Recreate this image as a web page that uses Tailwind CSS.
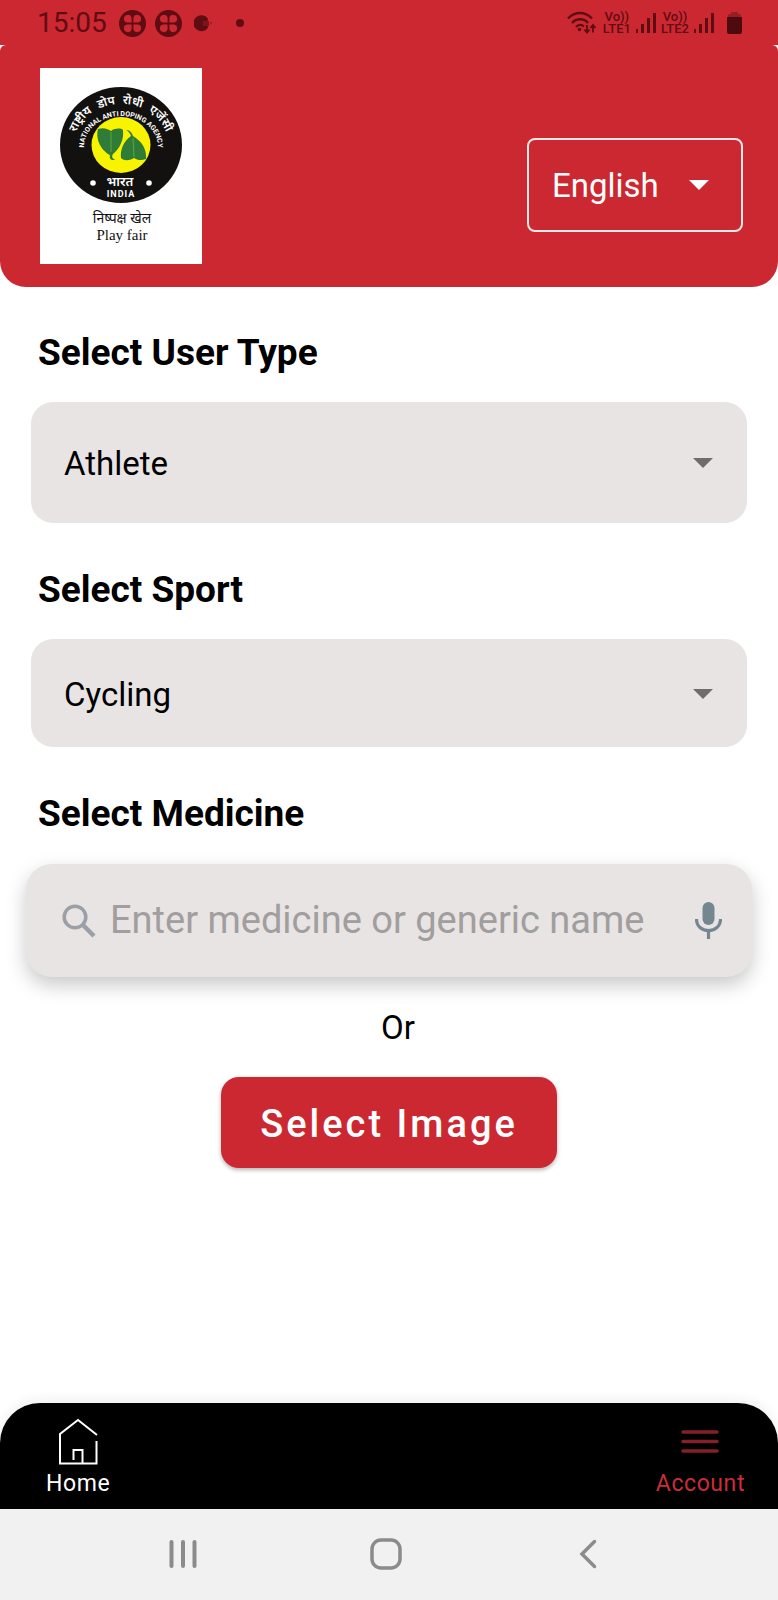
<!DOCTYPE html>
<html lang="en">
<head>
    <meta charset="UTF-8" />
    <meta name="viewport" content="width=device-width, initial-scale=1.0" />
    <script src="https://cdn.jsdelivr.net/npm/@tailwindcss/browser@4"></script>
    <title>Play Fair - Know Your Medicine</title>
</head>
<body class="min-h-screen flex flex-col bg-white text-black font-['Roboto',sans-serif]">
    <!-- Status bar -->
    <div class="flex items-center justify-between h-[45px] pl-[37px] pr-9 pt-px bg-[#cc2831] text-[#5f0c12]">
        <div class="flex items-center gap-3">
            <span class="text-[28px] leading-8">15:05</span>
            <svg class="w-[27px] h-[27px]" viewBox="0 0 27 27">
                <circle cx="13.5" cy="13.5" r="13.5" fill="currentColor" />
                <g fill="#cc2831">
                    <path d="M12.6 12.6H8a3.900 3.900 0 1 1 4.600-4.600z" />
                    <path d="M14.400 12.600h4.600a3.900 3.900 0 1 0-4.600-4.600z" />
                    <path d="M12.600 14.400H8a3.900 3.900 0 1 0 4.600 4.600z" />
                    <path d="M14.400 14.400h4.600a3.900 3.900 0 1 1-4.600 4.600z" />
                </g>
            </svg>
            <svg class="w-[27px] h-[27px] -ml-[3px]" viewBox="0 0 27 27">
                <circle cx="13.5" cy="13.5" r="13.5" fill="currentColor" />
                <g fill="#cc2831">
                    <path d="M12.6 12.6H8a3.900 3.900 0 1 1 4.600-4.600z" />
                    <path d="M14.400 12.600h4.600a3.900 3.900 0 1 0-4.600-4.600z" />
                    <path d="M12.600 14.400H8a3.900 3.900 0 1 0 4.600 4.600z" />
                    <path d="M14.400 14.400h4.600a3.900 3.900 0 1 1-4.600 4.600z" />
                </g>
            </svg>
            <svg class="w-[19px] h-[18px]" viewBox="0 0 19 18">
                <path d="M14 4.500A8 8 0 1 0 14.500 13L13 12H9.500V7H13.500z" fill="currentColor" />
                <path d="M9 7H15V12H9z" fill="#7d141b" />
                <circle cx="17" cy="9" r="1.200" fill="#a11d25" />
            </svg>
            <span class="w-2 h-2 ml-[11px] rounded-full bg-[#5f0c12]"></span>
        </div>
        <div class="flex items-center gap-[5px]">
            <svg class="w-[29px] h-6" viewBox="0 0 29 24" fill="none" stroke="currentColor" stroke-width="2.400">
                <path d="M1 7.500C8 .2 18 .2 25 7.500M5 12c4.500-5 12-5 16 0M9 16c2.500-2.800 5.500-2.800 8-.5" />
                <circle cx="12.500" cy="18.500" r="1.800" fill="currentColor" stroke="none" />
                <path d="M20 14v7M17.500 18.500L20 21.500l2.500-3M26 21.500v-7M23.500 17l2.500-3 2.500 3" stroke-width="1.800" />
            </svg>
            <div class="ml-[2px] text-center text-[13px] leading-3 font-medium">
                <div>Vo))</div>
                <div>LTE1</div>
            </div>
            <svg class="w-5 h-6" viewBox="0 0 20 24" fill="currentColor">
                <path d="M0 18h2v4H0zM5 13h3v9H5zM11 7h3v15h-3zM17 2h3v20h-3z" />
            </svg>
            <div class="text-center text-[13px] leading-3 font-medium">
                <div>Vo))</div>
                <div>LTE2</div>
            </div>
            <svg class="w-5 h-6" viewBox="0 0 20 24" fill="currentColor">
                <path d="M0 18h2v4H0zM5 13h3v9H5zM11 7h3v15h-3zM17 2h3v20h-3z" />
            </svg>
            <svg class="w-[15px] h-6 ml-2" viewBox="0 0 15 24">
                <path d="M1 6V4.500Q1 3 2.500 3H4V1h7v2h1.500Q14 3 14 4.500V6z" fill="#9c1c24" />
                <path d="M0 6h15v15q0 2-2 2H2q-2 0-2-2z" fill="#4d0a0f" />
            </svg>
        </div>
    </div>

    <!-- Header -->
    <header class="flex items-start justify-between pl-10 pr-[35px] pt-[23px] pb-[23px] bg-[#cc2831] rounded-t-md rounded-b-[26px]">
        <svg class="w-[162px] h-[196px] bg-white" viewBox="0 0 162 196" role="img" aria-label="National Anti Doping Agency India">
            <defs>
                <path id="arcOuter" d="M34 76A47 40 0 0 1 128 76" />
                <path id="arcInner" d="M43 86L44 79A37 31 0 0 1 118 79L119 86" />
            </defs>
            <ellipse cx="81" cy="77" rx="61" ry="58" fill="#13110f" />
            <ellipse cx="81" cy="77" rx="29.500" ry="28" fill="#f8f400" />
            <path d="M58 61C64 59 68 61 71 63C75 60 81 60 83 62C84 72 80 80 73 86C71 89 73 92 76 91C71 94 69 90 70 87C62 83 55 72 58 61Z" fill="#2f7b38" />
            <path d="M86 62C90 62 92 65 93 68C101 73 107 80 106 91C101 93 97 92 94 90C89 93 84 93 81 90C80 81 84 73 91 68C90 65 89 64 86 62Z" fill="#2f7b38" />
            <path d="M71 64L71 84M93 70L94 89" stroke="#6fae3c" stroke-width=".8" />
            <g fill="#ffffff" text-anchor="middle">
                <text font-size="12" font-weight="600" font-family="Noto Sans Devanagari, Noto Sans, sans-serif"><textPath href="#arcOuter" startOffset="50%">राष्ट्रीय<tspan dx="4"> डोप</tspan><tspan dx="4"> रोधी</tspan><tspan dx="4"> एजेंसी</tspan></textPath></text>
                <text font-size="7" font-weight="700" font-family="Roboto, sans-serif"><textPath href="#arcInner" startOffset="50%">NATIONAL ANTI DOPING AGENCY</textPath></text>
                <text x="80" y="118" font-size="13" font-weight="600" font-family="Noto Sans Devanagari, Noto Sans, sans-serif">भारत</text>
                <text x="81" y="129" font-size="9" font-weight="700" letter-spacing="1" font-family="Roboto, sans-serif">INDIA</text>
            </g>
            <circle cx="53" cy="115" r="2.800" fill="#ffffff" />
            <circle cx="109" cy="115" r="2.800" fill="#ffffff" />
            <g fill="#13110f" text-anchor="middle">
                <text x="82" y="155" font-size="14" font-family="Noto Sans Devanagari, Noto Sans, sans-serif">निष्पक्ष खेल</text>
                <text x="82" y="172" font-size="15" font-family="Liberation Serif, serif">Play fair</text>
            </g>
        </svg>
        <div class="relative mt-[70px]">
            <select aria-label="Language" class="appearance-none w-[216px] h-[94px] pl-[23px] pt-[2px] border-2 border-[#fbe9ea] rounded-lg text-[33px] text-white">
                <option>English</option>
                <option>Hindi</option>
            </select>
            <svg class="absolute right-[34px] top-[42px] w-5 h-[10px] pointer-events-none" viewBox="0 0 20 10">
                <path d="M0 0h20L10 10z" fill="#ffffff" />
            </svg>
        </div>
    </header>

    <!-- Form -->
    <main class="flex-1 flex flex-col px-[31px] pt-11">
        <label for="userType" class="pl-[7px] text-[37px] leading-[44px] font-bold">Select User Type</label>
        <div class="relative mt-[27px]">
            <select id="userType" class="appearance-none block w-full h-[121px] pl-[33px] pt-[3px] bg-[#e8e4e3] rounded-[22px] text-[33px]">
                <option>Athlete</option>
                <option>Coach</option>
            </select>
            <svg class="absolute right-[34px] top-[56px] w-5 h-[10px] pointer-events-none" viewBox="0 0 20 10">
                <path d="M0 0h20L10 10z" fill="#6e6c6c" />
            </svg>
        </div>

        <label for="sport" class="mt-[45px] pl-[7px] text-[37px] leading-[44px] font-bold">Select Sport</label>
        <div class="relative mt-[27px]">
            <select id="sport" class="appearance-none block w-full h-[108px] pl-[33px] pt-[3px] bg-[#e8e4e3] rounded-[22px] text-[33px]">
                <option>Cycling</option>
                <option>Athletics</option>
            </select>
            <svg class="absolute right-[34px] top-[50px] w-5 h-[10px] pointer-events-none" viewBox="0 0 20 10">
                <path d="M0 0h20L10 10z" fill="#6e6c6c" />
            </svg>
        </div>

        <label for="medicine" class="mt-[45px] pl-[7px] text-[37px] leading-[44px] font-bold">Select Medicine</label>
        <div class="flex items-center h-[113px] mt-7 -mx-[5px] pl-9 pr-[30px] bg-[#e8e4e3] rounded-[26px] shadow-[0_8px_20px_rgba(0,0,0,0.22)]">
            <svg class="shrink-0 w-[34px] h-[34px]" viewBox="0 0 34 34" fill="none" stroke="#9b9fa6" stroke-width="3.500">
                <circle cx="13" cy="13" r="10.800" />
                <path d="M21 21L32 32" stroke-width="4.500" />
            </svg>
            <input id="medicine" type="text" placeholder="Enter medicine or generic name" class="flex-1 min-w-0 ml-[14px] text-[38px] placeholder:text-[#a09e9e] outline-none" />
            <button type="button" aria-label="Voice search">
                <svg class="w-[27px] h-[37px]" viewBox="0 0 27 37">
                    <rect x="7.500" y="0" width="12" height="23" rx="6" fill="#748790" />
                    <path d="M1.500 17C1.500 24.500 7 28.500 13.500 28.500S25.500 24.500 25.500 17M13.500 28.500V37" fill="none" stroke="#748790" stroke-width="3.200" />
                </svg>
            </button>
        </div>

        <p class="mt-[29px] pl-[18px] text-center text-[33px] leading-[44px]">Or</p>
        <button type="button" class="self-center mt-[27px] px-[39px] pt-[3px] h-[91px] bg-[#cc2831] rounded-[18px] shadow-[0_2px_4px_rgba(0,0,0,0.3)] text-[38px] font-medium tracking-[3px] text-white">Select Image</button>
    </main>

    <!-- Bottom navigation -->
    <nav class="flex items-end justify-between h-[106px] pl-[46px] pr-[33px] pb-[11px] bg-black rounded-t-[40px] shadow-[0_-4px_12px_rgba(0,0,0,0.06)] text-[23px] leading-7 tracking-wide">
        <a href="#home" class="flex flex-col items-center gap-[5px] text-white">
            <svg class="w-10 h-[47px]" viewBox="0 0 40 47" fill="none" stroke="currentColor" stroke-width="2">
                <path d="M39 17L20 2L2 16V45.500H38.500V23" />
                <path d="M15.500 42V32H24.500V45" />
            </svg>
            Home
        </a>
        <a href="#account" class="flex flex-col items-center gap-[17px] text-[#c92d3c]">
            <svg class="w-[38px] h-[23px]" viewBox="0 0 38 23" stroke="#842029" stroke-width="3.500" stroke-linecap="round">
                <path d="M2 2H36M2 11.500H36M2 21H36" />
            </svg>
            Account
        </a>
    </nav>

    <!-- System buttons -->
    <div class="flex items-center justify-between h-[91px] pl-[168px] pr-[174px] pb-[2px] bg-[#f1f1f1] text-[#8b8b8b]">
        <button type="button" aria-label="Recent apps">
            <svg class="w-[30px] h-[30px]" viewBox="0 0 30 30" stroke="currentColor" stroke-width="4" stroke-linecap="round">
                <path d="M3.500 3V27M15 3V27M26.500 3V27" />
            </svg>
        </button>
        <button type="button" aria-label="Home screen">
            <svg class="w-[32px] h-[32px]" viewBox="0 0 32 32" fill="none" stroke="currentColor" stroke-width="3.500">
                <rect x="2" y="2" width="28" height="28" rx="9" />
            </svg>
        </button>
        <button type="button" aria-label="Back">
            <svg class="w-[30px] h-[30px]" viewBox="0 0 30 30" fill="none" stroke="currentColor" stroke-width="3.500" stroke-linecap="round">
                <path d="M20.500 2.500L8 15L20.500 27.500" />
            </svg>
        </button>
    </div>
</body>
</html>
